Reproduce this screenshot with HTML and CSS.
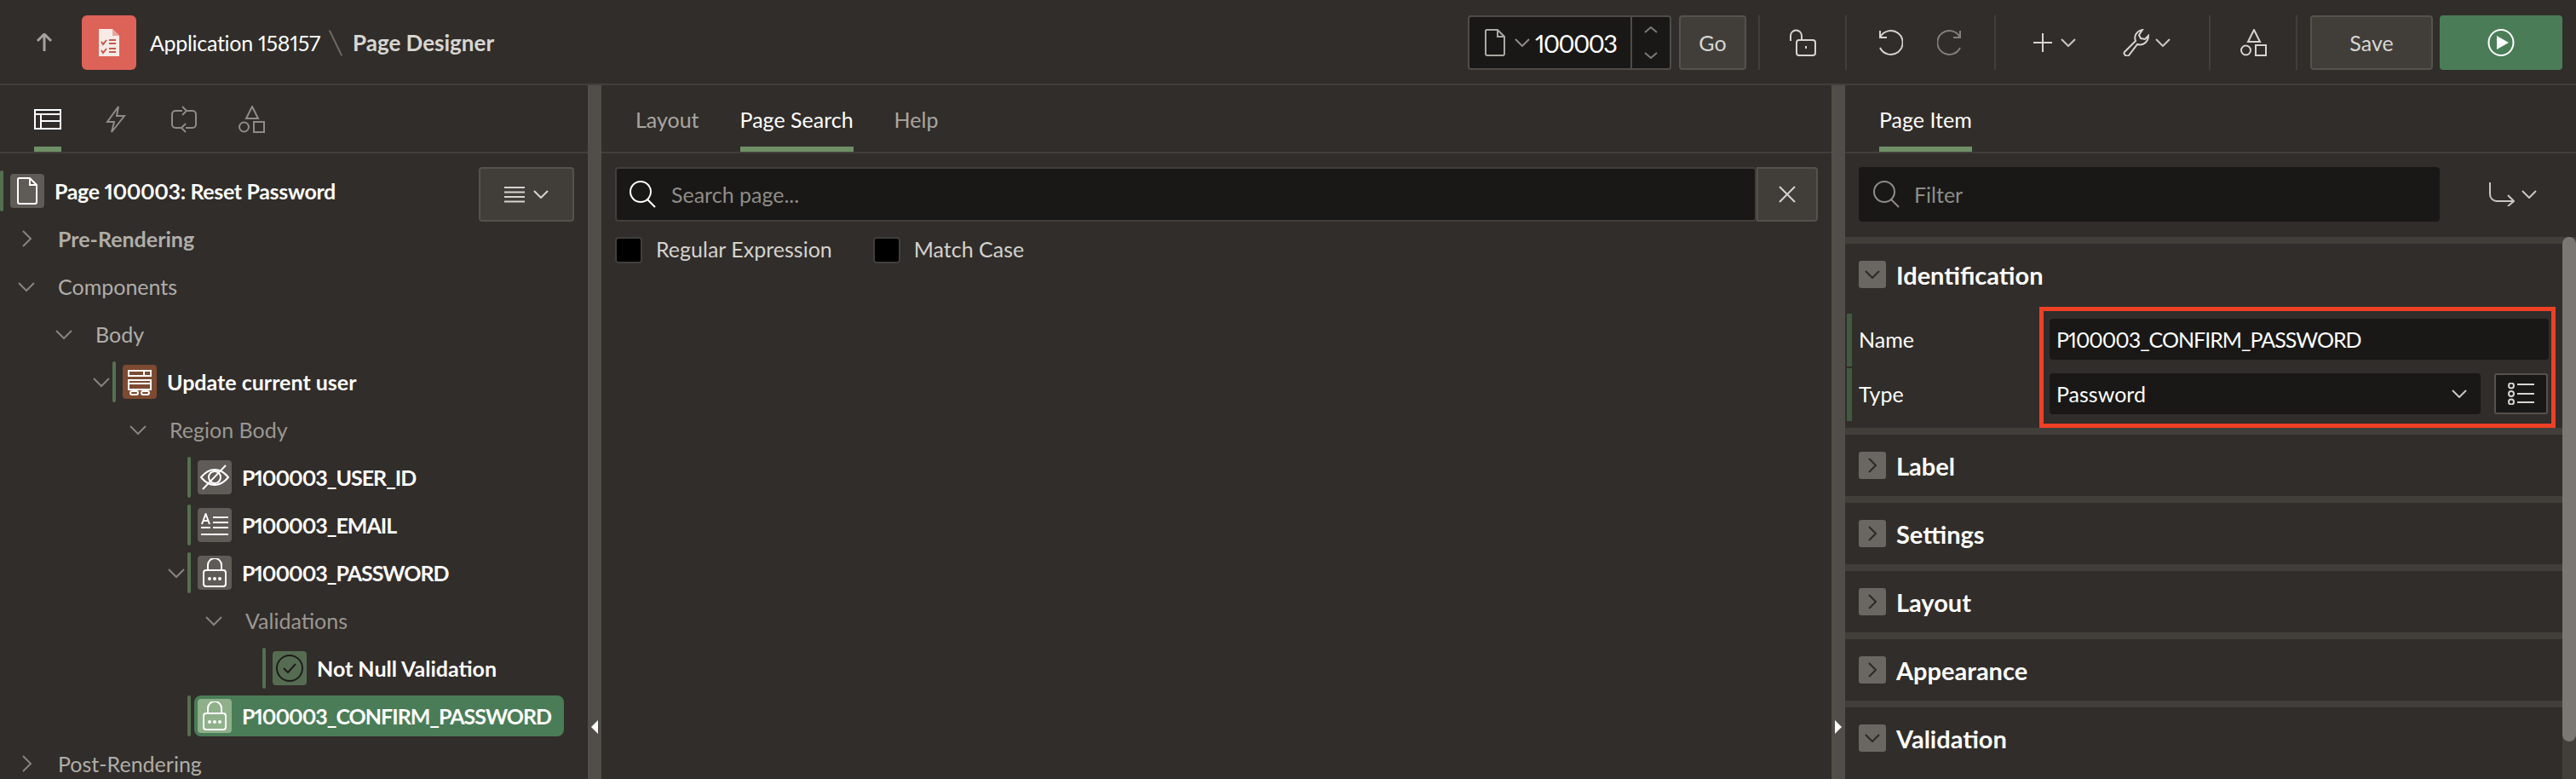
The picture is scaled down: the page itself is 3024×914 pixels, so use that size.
FILE: index.html
```html
<!DOCTYPE html>
<html lang="en">
  <head>
    <meta charset="UTF-8" />
    <meta name="viewport" content="width=device-width, initial-scale=1.0" />
    <title>Page Designer</title>
    <link rel="stylesheet" href="styles.css">
  </head>
  <body>
    <header class="topbar">
      <svg class="up-arrow" width="20" height="22" viewBox="0 0 20 22"><path d="M10 21V2M2 9l8-8 8 8" /></svg>
      <div class="app-icon">
        <svg width="24" height="32" viewBox="0 0 24 32"><path class="doc" d="M0 0h16l8 8v24H0z" /><path class="fold" d="M16 0l8 8h-8z" /><path class="ticks" d="M3 15l2 3 4-5M12 13h8M12 17h8M3 25l2 3 4-5M12 23h8M12 27h8" /></svg>
      </div>
      <span class="crumb">Application 158157</span>
      <span class="crumb-sep"></span>
      <strong class="crumb-current">Page Designer</strong>

      <div class="page-field">
        <svg class="ico" width="24" height="32" viewBox="0 0 24 32"><path d="M2 1h13l8 8v20a2 2 0 0 1-2 2H3a2 2 0 0 1-2-2V2zM15 1v8h8" /></svg>
        <svg class="chev-sm" width="18" height="10" viewBox="0 0 18 10"><path d="M1 1l8 8 8-8" /></svg>
        <span class="page-num">100003</span>
        <div class="stepper">
          <svg width="16" height="8" viewBox="0 0 16 8"><path d="M1 7l7-6 7 6" /></svg>
          <svg width="16" height="8" viewBox="0 0 16 8"><path d="M1 1l7 6 7-6" /></svg>
        </div>
      </div>
      <button class="btn btn-go">Go</button>
      <span class="divider div-a"></span>
      <svg class="ico lock" width="32" height="32" viewBox="0 0 32 32"><path d="M2 14V8a6.500 6.500 0 0 1 13 0v4" /><rect x="9" y="13" width="22" height="18" rx="3" /><path d="M20 20v3" /></svg>
      <span class="divider div-b"></span>
      <svg class="ico undo" width="30" height="32" viewBox="0 0 30 32"><path d="M3 10a14 14 0 1 1 0 12M3 2v8h8" /></svg>
      <svg class="ico redo" width="30" height="32" viewBox="0 0 30 32"><path d="M27 10a14 14 0 1 0 0 12M27 2v8h-8" /></svg>
      <span class="divider div-c"></span>
      <svg class="ico plus" width="24" height="24" viewBox="0 0 24 24"><path d="M12 1v22M1 12h22" /></svg>
      <svg class="chev-sm plus-chev" width="18" height="10" viewBox="0 0 18 10"><path d="M1 1l8 8 8-8" /></svg>
      <svg class="ico wrench" width="32" height="32" viewBox="0 0 32 32"><path d="M2 27L15 14c-2-5 0-11 8-13l-4 6 2 4 5 1 4-4c0 7-6 12-13 10L7 31c-3 2-7-2-5-4z" /></svg>
      <svg class="chev-sm wrench-chev" width="18" height="10" viewBox="0 0 18 10"><path d="M1 1l8 8 8-8" /></svg>
      <span class="divider div-d"></span>
      <svg class="ico shapes" width="32" height="32" viewBox="0 0 32 32"><path d="M16 1l7 14H9z" /><circle cx="6.500" cy="25" r="5.500" /><rect x="18" y="19" width="12" height="12" /></svg>
      <span class="divider div-e"></span>
      <button class="btn btn-save">Save</button>
      <button class="btn btn-run">
        <svg width="32" height="32" viewBox="0 0 32 32"><ellipse cx="16" cy="16" rx="14.500" ry="15" fill="none" stroke="#fff" stroke-width="2" /><path d="M11 8l14 8-14 8z" fill="#fff" /></svg>
      </button>
    </header>

    <div class="workspace">
      <section class="panel panel-left">
        <div class="tabs icon-tabs">
          <div class="icon-tab active">
            <svg width="32" height="24" viewBox="0 0 32 24"><path d="M1 1h30v22H1zM1 6h30M8 6v17M8 14h23" /></svg>
          </div>
          <div class="icon-tab">
            <svg width="24" height="32" viewBox="0 0 24 32"><path d="M15 1L2 19h8l-3 12 15-19h-9z" /></svg>
          </div>
          <div class="icon-tab">
            <svg width="32" height="32" viewBox="0 0 32 32"><path d="M14 6H6a4 4 0 0 0-4 4v12a4 4 0 0 0 4 4h6M18 26h8a4 4 0 0 0 4-4V10a4 4 0 0 0-4-4h-6M14 1l5 5-5 5M18 21l-5 5 5 5" /></svg>
          </div>
          <div class="icon-tab">
            <svg width="32" height="32" viewBox="0 0 32 32"><path d="M16 1l7 14H9z" /><circle cx="6.500" cy="25" r="5.500" /><rect x="18" y="19" width="12" height="12" /></svg>
          </div>
        </div>

        <div class="tree">
          <div class="row row-page">
            <span class="bar"></span>
            <span class="node-icon grey">
              <svg width="24" height="32" viewBox="0 0 24 32"><path d="M2 1h13l8 8v20a2 2 0 0 1-2 2H3a2 2 0 0 1-2-2V2zM15 1v8h8" /></svg>
            </span>
            <span class="name page-name">Page 100003: Reset Password</span>
            <button class="menu-btn">
              <svg width="24" height="20" viewBox="0 0 24 20"><path d="M0 2h24M0 7.500h24M0 13h24M0 18.500h24" /></svg>
              <svg width="18" height="10" viewBox="0 0 18 10"><path d="M1 1l8 8 8-8" /></svg>
            </button>
          </div>
          <div class="row lvl-0">
            <svg class="tw collapsed" width="20" height="20" viewBox="0 0 20 20"><path d="M6 1l9 9-9 9" /></svg>
            <span class="label strong">Pre-Rendering</span>
          </div>
          <div class="row lvl-0">
            <svg class="tw" width="20" height="20" viewBox="0 0 20 20"><path d="M1 6l9 9 9-9" /></svg>
            <span class="label">Components</span>
          </div>
          <div class="row lvl-1">
            <svg class="tw" width="20" height="20" viewBox="0 0 20 20"><path d="M1 6l9 9 9-9" /></svg>
            <span class="label">Body</span>
          </div>
          <div class="row lvl-2">
            <svg class="tw" width="20" height="20" viewBox="0 0 20 20"><path d="M1 6l9 9 9-9" /></svg>
            <span class="bar"></span>
            <span class="node-icon brown">
              <svg width="28" height="32" viewBox="0 0 28 32"><path d="M1 3h26v6H1zM19 3v6M1 14h26v11H1zM1 14v4h26" /><rect x="3" y="27" width="9" height="4" rx="2" /><rect x="16" y="27" width="9" height="4" rx="2" /></svg>
            </span>
            <span class="name">Update current user</span>
          </div>
          <div class="row lvl-3">
            <svg class="tw" width="20" height="20" viewBox="0 0 20 20"><path d="M1 6l9 9 9-9" /></svg>
            <span class="label dim">Region Body</span>
          </div>
          <div class="row lvl-4">
            <span class="tw-gap"></span>
            <span class="bar"></span>
            <span class="node-icon grey">
              <svg width="34" height="30" viewBox="0 0 34 30"><path d="M1 15c5-6 10-9 16-9s11 3 16 9c-5 6-10 9-16 9S6 21 1 15z" /><circle cx="17" cy="15" r="7" /><path d="M3 29L30 1" /></svg>
            </span>
            <span class="name item-id">P100003_USER_ID</span>
          </div>
          <div class="row lvl-4">
            <span class="tw-gap"></span>
            <span class="bar"></span>
            <span class="node-icon grey">
              <svg width="32" height="28" viewBox="0 0 32 28"><path d="M1 13L5.500 1 10 13M3 9h5M0 17h11M14 5h18M14 11h18M14 17h18M0 25h32" /></svg>
            </span>
            <span class="name item-id">P100003_EMAIL</span>
          </div>
          <div class="row lvl-4">
            <svg class="tw" width="20" height="20" viewBox="0 0 20 20"><path d="M1 6l9 9 9-9" /></svg>
            <span class="bar"></span>
            <span class="node-icon grey">
              <svg width="28" height="34" viewBox="0 0 28 34"><path d="M6 14V8a8 8 0 0 1 16 0v6" /><rect x="1" y="14" width="26" height="19" rx="3" /><circle cx="8" cy="24" r="1" /><circle cx="14" cy="24" r="1" /><circle cx="20" cy="24" r="1" /></svg>
            </span>
            <span class="name item-id">P100003_PASSWORD</span>
          </div>
          <div class="row lvl-5">
            <svg class="tw" width="20" height="20" viewBox="0 0 20 20"><path d="M1 6l9 9 9-9" /></svg>
            <span class="label dim">Validations</span>
          </div>
          <div class="row lvl-6">
            <span class="tw-gap"></span>
            <span class="bar"></span>
            <span class="node-icon green">
              <svg width="32" height="32" viewBox="0 0 32 32"><circle cx="16" cy="16" r="15" /><path d="M9 16l5 5 9-10" /></svg>
            </span>
            <span class="name">Not Null Validation</span>
          </div>
          <div class="row lvl-4">
            <span class="tw-gap"></span>
            <span class="bar bar-selected"></span>
            <div class="selected">
              <span class="node-icon pale">
                <svg width="28" height="34" viewBox="0 0 28 34"><path d="M6 14V8a8 8 0 0 1 16 0v6" /><rect x="1" y="14" width="26" height="19" rx="3" /><circle cx="8" cy="24" r="1" /><circle cx="14" cy="24" r="1" /><circle cx="20" cy="24" r="1" /></svg>
              </span>
              <span class="name item-id">P100003_CONFIRM_PASSWORD</span>
            </div>
          </div>
          <div class="row lvl-0">
            <svg class="tw collapsed" width="20" height="20" viewBox="0 0 20 20"><path d="M6 1l9 9-9 9" /></svg>
            <span class="label">Post-Rendering</span>
          </div>
        </div>
      </section>

      <div class="splitter"><span class="arrow arrow-left"></span></div>

      <section class="panel panel-center">
        <div class="tabs text-tabs">
          <span class="tab">Layout</span>
          <span class="tab active">Page Search</span>
          <span class="tab">Help</span>
        </div>
        <div class="search-wrap">
          <div class="search-row">
            <div class="search-box">
              <svg class="search-ico" width="32" height="32" viewBox="0 0 32 32"><circle cx="14" cy="13" r="12" /><path d="M22 22l9 9" /></svg>
              <span class="placeholder">Search page...</span>
            </div>
            <button class="close-btn">
              <svg width="20" height="20" viewBox="0 0 20 20"><path d="M1 1l18 18M19 1L1 19" /></svg>
            </button>
          </div>
          <div class="checks">
            <span class="check"></span><span class="check-label first">Regular Expression</span>
            <span class="check"></span><span class="check-label">Match Case</span>
          </div>
        </div>
      </section>

      <div class="splitter"><span class="arrow arrow-right"></span></div>

      <section class="panel panel-right">
        <div class="tabs text-tabs">
          <span class="tab active">Page Item</span>
        </div>
        <div class="filter-row">
          <div class="filter-box">
            <svg class="filter-ico" width="32" height="32" viewBox="0 0 32 32"><circle cx="14" cy="13" r="12" /><path d="M22 22l9 9" /></svg>
            <span class="placeholder filter-text">Filter</span>
          </div>
          <svg class="route" width="30" height="28" viewBox="0 0 30 28"><path d="M1 0v14a8 8 0 0 0 8 8h20M22 15l7 7-7 6" /></svg>
          <svg class="route-chev" width="18" height="10" viewBox="0 0 18 10"><path d="M1 1l8 8 8-8" /></svg>
        </div>

        <div class="props">
          <div class="prop-group open">
            <div class="group-head">
              <span class="toggle"><svg width="18" height="10" viewBox="0 0 18 10"><path d="M1 1l8 8 8-8" /></svg></span>
              <span class="group-title">Identification</span>
            </div>
            <div class="field">
              <span class="field-label">Name</span>
              <div class="input item-id">P100003_CONFIRM_PASSWORD</div>
            </div>
            <div class="field">
              <span class="field-label">Type</span>
              <div class="input select">
                Password
                <svg width="18" height="10" viewBox="0 0 18 10"><path d="M1 1l8 8 8-8" /></svg>
              </div>
              <button class="lov-btn">
                <svg width="32" height="26" viewBox="0 0 32 26"><circle cx="4" cy="3.500" r="3" /><circle cx="4" cy="13" r="3" /><circle cx="4" cy="22.500" r="3" /><path d="M11 2h20M11 13h20M11 23h20" /></svg>
              </button>
            </div>
            <div class="callout"></div>
          </div>
          <div class="prop-group">
            <div class="group-head">
              <span class="toggle"><svg width="10" height="18" viewBox="0 0 10 18"><path d="M1 1l8 8-8 8" /></svg></span>
              <span class="group-title">Label</span>
            </div>
          </div>
          <div class="prop-group">
            <div class="group-head">
              <span class="toggle"><svg width="10" height="18" viewBox="0 0 10 18"><path d="M1 1l8 8-8 8" /></svg></span>
              <span class="group-title">Settings</span>
            </div>
          </div>
          <div class="prop-group">
            <div class="group-head">
              <span class="toggle"><svg width="10" height="18" viewBox="0 0 10 18"><path d="M1 1l8 8-8 8" /></svg></span>
              <span class="group-title">Layout</span>
            </div>
          </div>
          <div class="prop-group">
            <div class="group-head">
              <span class="toggle"><svg width="10" height="18" viewBox="0 0 10 18"><path d="M1 1l8 8-8 8" /></svg></span>
              <span class="group-title">Appearance</span>
            </div>
          </div>
          <div class="prop-group">
            <div class="group-head">
              <span class="toggle"><svg width="18" height="10" viewBox="0 0 18 10"><path d="M1 1l8 8 8-8" /></svg></span>
              <span class="group-title">Validation</span>
            </div>
          </div>
          <div class="scroll-track"><div class="scroll-thumb"></div></div>
        </div>
      </section>
    </div>
  </body>
</html>
```

FILE: styles.css
```css
* {
  box-sizing: border-box;
}
html,
body {
  margin: 0;
  height: 914px;
  overflow: hidden;
}
body {
  background-color: #312d2a;
  color: #fff;
  font-family: "Lato", "Noto Sans", sans-serif;
  font-size: 25px;
  font-variant-numeric: proportional-nums;
}
svg {
  display: block;
  flex: none;
  fill: none;
  stroke-width: 2;
}
button {
  font-family: inherit;
  color: inherit;
  padding: 0;
}

/* top bar */
.topbar {
  display: flex;
  align-items: center;
  height: 100px;
  padding-top: 2px;
  border-bottom: 2px solid #423f3b;
}
.topbar > * {
  flex: none;
}
.up-arrow {
  margin-left: 42px;
  stroke: #a5a29d;
  stroke-width: 3;
}
.app-icon {
  display: flex;
  align-items: center;
  justify-content: center;
  width: 64px;
  height: 64px;
  margin-left: 34px;
  border-radius: 6px;
  background-color: #dd6258;
}
.app-icon .doc {
  fill: #f8ebe6;
}
.app-icon .fold {
  fill: #e9a79f;
}
.app-icon .ticks {
  stroke: #c9594f;
}
.crumb {
  margin-left: 16px;
  width: 199px;
  letter-spacing: -0.3px;
  white-space: nowrap;
}
.crumb-sep {
  width: 2px;
  height: 33px;
  margin: 0 19px 0 18px;
  background-color: #6e6a65;
  transform: rotate(-26deg);
}
.crumb-current {
  width: 164px;
  color: #d8d6d2;
  font-size: 26px;
  white-space: nowrap;
}
.ico {
  stroke: #d6d4d0;
}
.chev-sm {
  stroke: #c9c7c3;
}
.page-field {
  display: flex;
  align-items: center;
  width: 239px;
  height: 64px;
  margin-left: 1145px;
  padding-left: 18px;
  background-color: #191816;
  border: 2px solid #4f4c47;
  border-radius: 4px;
}
.page-field .ico {
  stroke: #aaa8a3;
}
.page-field .chev-sm {
  margin-left: 11px;
  stroke: #8f8c87;
}
.page-num {
  margin-left: 6px;
  width: 116px;
  font-size: 29px;
  letter-spacing: -1.5px;
}
.stepper {
  display: flex;
  flex-direction: column;
  align-items: center;
  justify-content: center;
  gap: 22px;
  width: 47px;
  height: 60px;
  border-left: 2px solid #4f4c47;
  stroke: #7d7a75;
}
.btn {
  display: flex;
  align-items: center;
  justify-content: center;
  height: 64px;
  border-radius: 4px;
  background-color: #413e3a;
  border: 2px solid #55524d;
  color: #d8d6d2;
  font-size: 25px;
}
.btn-go {
  width: 79px;
  margin-left: 9px;
}
.divider {
  width: 2px;
  height: 64px;
  background-color: #423f3b;
}
.div-a {
  margin-left: 14px;
}
.lock {
  margin-left: 34px;
}
.div-b {
  margin-left: 34px;
}
.undo {
  margin-left: 36px;
}
.redo {
  margin-left: 40px;
  stroke: #82807b;
}
.div-c {
  margin-left: 37px;
}
.plus {
  margin-left: 43px;
}
.plus-chev {
  margin-left: 9px;
}
.wrench {
  margin-left: 55px;
}
.wrench-chev {
  margin-left: 6px;
}
.div-d {
  margin-left: 45px;
}
.shapes {
  margin-left: 35px;
}
.div-e {
  margin-left: 33px;
}
.btn-save {
  width: 144px;
  margin-left: 15px;
}
.btn-run {
  width: 144px;
  margin-left: 8px;
  background-color: #4a7d57;
  border: none;
}

/* panels */
.workspace {
  display: flex;
  height: 814px;
}
.panel {
  overflow: hidden;
}
.panel-left {
  width: 690px;
}
.panel-center {
  width: 1444px;
}
.panel-right {
  width: 858px;
  flex: none;
}
.splitter {
  width: 16px;
  flex: none;
  background-color: #514e49;
}
.arrow {
  display: block;
  width: 0;
  height: 0;
  margin-top: 745px;
  border-top: 8px solid transparent;
  border-bottom: 8px solid transparent;
}
.arrow-left {
  margin-left: 4px;
  border-right: 8px solid #fff;
}
.arrow-right {
  margin-left: 4px;
  border-left: 8px solid #fff;
}

/* tabs */
.tabs {
  display: flex;
  height: 80px;
  border-bottom: 2px solid #423f3b;
}
.icon-tabs {
  gap: 48px;
  padding-left: 40px;
}
.icon-tab {
  display: flex;
  align-items: center;
  justify-content: center;
  width: 32px;
  height: 78px;
  padding-top: 8px;
  border-bottom: 6px solid transparent;
  stroke: #8f8c87;
}
.icon-tab.active {
  border-color: #6f9067;
  stroke: #fff;
}
.text-tabs {
  gap: 48px;
  padding-left: 40px;
}
.tab {
  display: flex;
  align-items: center;
  height: 78px;
  padding-top: 8px;
  border-bottom: 6px solid transparent;
  color: #a9a6a1;
  white-space: nowrap;
}
.tab.active {
  color: #fff;
  border-color: #6f9067;
}

/* tree */
.tree {
  display: flex;
  flex-direction: column;
  gap: 8px;
  padding-top: 20px;
}
.row {
  display: flex;
  align-items: center;
  flex: none;
  height: 48px;
}
.lvl-0 {
  padding-left: 21px;
}
.lvl-1 {
  padding-left: 65px;
}
.lvl-2 {
  padding-left: 109px;
}
.lvl-3 {
  padding-left: 152px;
}
.lvl-4 {
  padding-left: 197px;
}
.lvl-5 {
  padding-left: 241px;
}
.lvl-6 {
  padding-left: 285px;
}
.tw {
  stroke: #87847f;
}
.tw-gap {
  width: 20px;
}
.bar {
  width: 4px;
  height: 48px;
  margin: 0 8px 0 3px;
  flex: none;
  border-radius: 2px;
  background-color: #55704f;
}
.row-page .bar {
  margin-left: 0;
}
.bar-selected {
  margin-right: 4px;
}
.node-icon {
  display: flex;
  align-items: center;
  justify-content: center;
  width: 40px;
  height: 40px;
  flex: none;
  border-radius: 4px;
  stroke: #fff;
}
.node-icon.grey {
  background-color: #5f5b56;
}
.node-icon.brown {
  background-color: #7d4a32;
}
.node-icon.green {
  background-color: #566c52;
  stroke: #1d1c1a;
}
.node-icon.pale {
  background-color: #8fb08a;
}
.name {
  margin-left: 12px;
  font-weight: 700;
  white-space: nowrap;
}
.page-name {
  letter-spacing: -0.35px;
}
.item-id {
  letter-spacing: -1px;
}
.label {
  margin-left: 27px;
  color: #b0ada8;
  white-space: nowrap;
}
.label.strong {
  font-weight: 700;
}
.label.dim {
  color: #9a9792;
}
.menu-btn {
  display: flex;
  align-items: center;
  justify-content: center;
  gap: 10px;
  width: 112px;
  height: 64px;
  margin: 7px 16px 0 auto;
  flex: none;
  background-color: #413e3a;
  border: 2px solid #55524d;
  border-radius: 4px;
  stroke: #d6d4d0;
}
.selected {
  display: flex;
  align-items: center;
  width: 434px;
  height: 48px;
  padding-left: 4px;
  border-radius: 8px;
  background-color: #4a7d57;
}

/* page search */
.search-wrap {
  padding: 16px 16px 0 16px;
}
.search-row {
  display: flex;
  height: 64px;
}
.search-box,
.filter-box {
  display: flex;
  align-items: center;
  background-color: #191816;
  border: 2px solid #423f3b;
  border-radius: 4px;
}
.search-box {
  flex: 1;
  padding-left: 14px;
}
.search-ico {
  stroke: #fff;
}
.placeholder {
  margin-left: 18px;
  color: #8f8c87;
}
.close-btn {
  display: flex;
  align-items: center;
  justify-content: center;
  width: 72px;
  background-color: #413e3a;
  border: 2px solid #55524d;
  border-radius: 0 4px 4px 0;
  stroke: #d6d4d0;
}
.checks {
  display: flex;
  align-items: center;
  margin-top: 17px;
}
.check {
  width: 32px;
  height: 31px;
  background-color: #000;
  border: 2px solid #423f3b;
  border-radius: 4px;
}
.check-label {
  margin-left: 16px;
  padding-bottom: 2px;
  color: #d4d2ce;
}
.check-label.first {
  margin-right: 48px;
}

/* property editor */
.filter-row {
  display: flex;
  align-items: center;
  height: 98px;
  padding: 0 0 2px 16px;
}
.filter-box {
  width: 682px;
  height: 64px;
  padding-left: 14px;
  border-color: #191816;
}
.filter-ico {
  stroke: #8f8c87;
}
.filter-text {
  margin-left: 17px;
}
.route {
  margin-left: 58px;
  stroke: #c9c7c3;
}
.route-chev {
  margin-left: 8px;
  stroke: #c9c7c3;
}
.props {
  position: relative;
}
.prop-group {
  height: 80px;
  width: 842px;
  border-top: 8px solid #423f3b;
}
.prop-group.open {
  height: 224px;
}
.group-head {
  display: flex;
  align-items: center;
  height: 72px;
  padding-left: 16px;
}
.prop-group.open .group-head {
  margin-bottom: 10px;
}
.toggle {
  display: flex;
  align-items: center;
  justify-content: center;
  width: 32px;
  height: 32px;
  border-radius: 3px;
  background-color: #6a6661;
  stroke: #2c2926;
}
.group-title {
  margin-left: 12px;
  font-size: 29px;
  font-weight: 700;
}
.field {
  display: flex;
  align-items: center;
  height: 62px;
  margin-left: 2px;
  padding: 0 0 2px 8px;
  border-left: 6px solid #3f5a3f;
}
.field + .field {
  margin-top: 2px;
}
.field-label {
  width: 224px;
  color: #fff;
}
.input {
  display: flex;
  align-items: center;
  justify-content: space-between;
  width: 586px;
  height: 48px;
  padding: 0 8px;
  background-color: #191816;
  border-radius: 4px;
}
.input.select {
  width: 506px;
  padding-right: 16px;
  stroke: #c9c7c3;
}
.lov-btn {
  display: flex;
  align-items: center;
  justify-content: center;
  width: 63px;
  height: 48px;
  margin-left: 16px;
  background-color: #191816;
  border: 2px solid #55524d;
  border-radius: 3px;
  stroke: #d6d4d0;
}
/* annotation drawn over the screenshot */
.callout {
  position: absolute;
  left: 228px;
  top: 82px;
  width: 606px;
  height: 142px;
  border: 5px solid #ee4025;
}
.scroll-track {
  position: absolute;
  left: 842px;
  top: 0;
  width: 16px;
  height: 640px;
  background-color: #423f3b;
}
.scroll-thumb {
  width: 16px;
  height: 592px;
  border-radius: 8px;
  background-color: #7b7772;
}
```
